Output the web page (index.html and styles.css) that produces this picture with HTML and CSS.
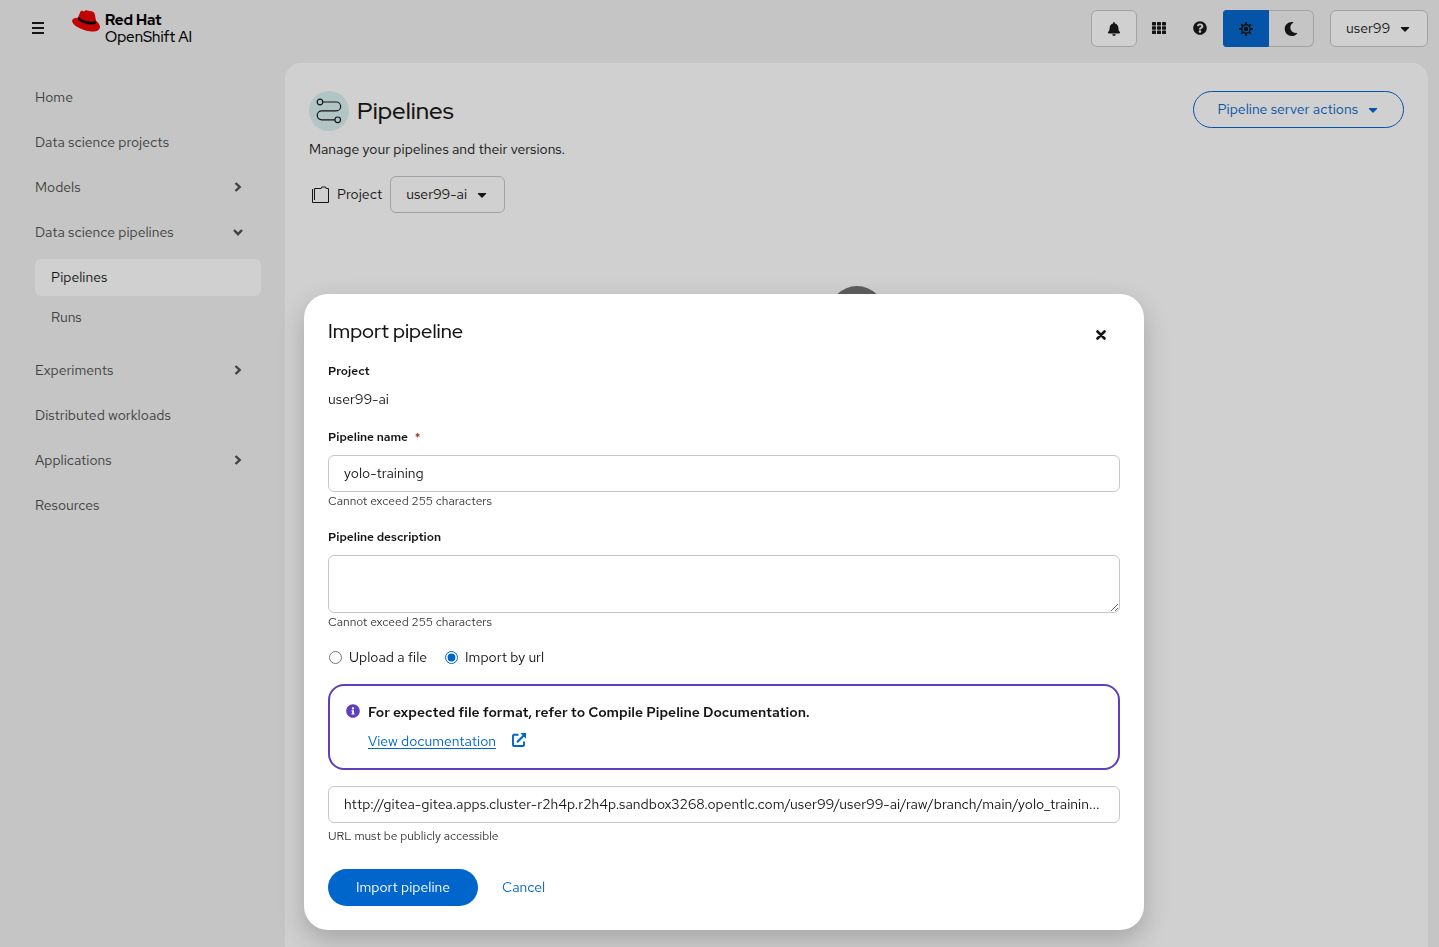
FILE: index.html
```
<!DOCTYPE html>
<html lang="en">
<head>
    <meta charset="UTF-8">
    <meta name="viewport" content="width=device-width, initial-scale=1.0">
    <title>Pipelines | Red Hat OpenShift AI</title>
    <link rel="stylesheet" href="styles.css">
</head>
<body>

<div class="page">
    <header class="masthead">
        <button class="plain-button menu-button" aria-label="Global navigation">
            <svg width="12" height="12" viewBox="0 0 12 12"><path d="M0 1h12M0 6h12M0 11h12" stroke="currentColor" stroke-width="2"/></svg>
        </button>
        <a class="brand" href="#">
            <svg class="hat" width="28" height="22" viewBox="0 0 28 22">
                <path d="M6.500 6.500 8.200 2Q9 .4 10.300 .8L12 1.500Q13.300 .1 15.200 .4L20.500 1.600Q22.300 2.100 22.700 3.900L24.100 10.800Q28.400 14 28 17.300C27.500 20.900 23.500 22.300 17.400 21.300C9.800 20.200 1.200 16 .2 11.600C-.3 8.800 2.600 7.700 6.200 7.800Z" fill="#e00"/>
                <path d="M6.700 6.600C8.500 10 17.900 13 23.500 11L24 13.600C20.500 16.200 8.700 13.200 5.900 9Z" fill="#000"/>
            </svg>
            <span class="brand-text"><strong>Red Hat</strong><span>OpenShift AI</span></span>
        </a>
        <div class="masthead-tools">
            <button class="tool-button bordered" aria-label="Notifications">
                <svg width="14" height="14" viewBox="0 0 448 512"><path fill="currentColor" d="M224 512c35.320 0 63.970-28.650 63.970-64H160.030c0 35.350 28.650 64 63.970 64zm215.390-149.710c-19.320-20.760-55.470-51.990-55.470-154.290 0-77.700-54.480-139.900-127.940-155.160V32c0-17.670-14.320-32-31.980-32s-31.980 14.330-31.980 32v20.840C118.560 68.100 64.080 130.300 64.080 208c0 102.300-36.150 133.530-55.470 154.290-6 6.450-8.660 14.160-8.610 21.710.11 16.400 12.980 32 32.100 32h383.800c19.120 0 32-15.600 32.100-32 .05-7.550-2.610-15.270-8.610-21.710z"/></svg>
            </button>
            <button class="tool-button" aria-label="Application launcher">
                <svg width="14" height="12" viewBox="0 0 14 12"><g fill="currentColor"><rect width="4" height="3.400" rx=".6"/><rect x="5" width="4" height="3.400" rx=".6"/><rect x="10" width="4" height="3.400" rx=".6"/><rect y="4.300" width="4" height="3.400" rx=".6"/><rect x="5" y="4.300" width="4" height="3.400" rx=".6"/><rect x="10" y="4.300" width="4" height="3.400" rx=".6"/><rect y="8.600" width="4" height="3.400" rx=".6"/><rect x="5" y="8.600" width="4" height="3.400" rx=".6"/><rect x="10" y="8.600" width="4" height="3.400" rx=".6"/></g></svg>
            </button>
            <button class="tool-button" aria-label="Help">
                <svg width="14" height="14" viewBox="0 0 512 512"><path fill="currentColor" d="M504 256c0 136.997-111.043 248-248 248S8 392.997 8 256C8 119.083 119.043 8 256 8s248 111.083 248 248zM262.655 90c-54.497 0-89.255 22.957-116.549 63.758-3.536 5.286-2.353 12.415 2.715 16.258l34.699 26.310c5.205 3.947 12.621 3.008 16.665-2.122 17.864-22.658 30.113-35.797 57.303-35.797 20.429 0 45.698 13.148 45.698 32.958 0 14.976-12.363 22.667-32.534 33.976C247.128 238.528 216 254.941 216 296v4c0 6.627 5.373 12 12 12h56c6.627 0 12-5.373 12-12v-1.333c0-28.462 83.186-29.647 83.186-106.667 0-58.002-60.165-102-116.531-102zM256 338c-25.365 0-46 20.635-46 46 0 25.364 20.635 46 46 46s46-20.636 46-46c0-25.365-20.635-46-46-46z"/></svg>
            </button>
            <div class="theme-toggle">
                <button class="selected" aria-label="Light theme">
                    <svg width="14" height="14" viewBox="0 0 14 14"><path d="M7 0v3M7 11v3M0 7h3M11 7h3M2.100 2.100l2 2M9.900 9.900l2 2M2.100 11.900l2-2M9.900 4.100l2-2" stroke="currentColor" stroke-width="1.800"/><circle cx="7" cy="7" r="4.200" fill="none" stroke="currentColor" stroke-width="1.400"/><circle cx="7" cy="7" r="2.200" fill="currentColor"/></svg>
                </button>
                <button aria-label="Dark theme">
                    <svg width="14" height="14" viewBox="0 0 512 512"><path fill="currentColor" d="M283.211 512c78.962 0 151.079-35.925 198.857-94.792 7.068-8.708-.639-21.430-11.562-19.350-124.203 23.654-238.262-71.576-238.262-196.954 0-72.222 38.662-138.635 101.498-174.394 9.686-5.512 7.250-20.197-3.756-22.230A258.156 258.156 0 0 0 283.211 0c-141.309 0-256 114.511-256 256 0 141.309 114.511 256 256 256z"/></svg>
                </button>
            </div>
            <button class="user-menu">user99 <svg width="10" height="5" viewBox="0 0 10 5"><path d="M1.300 0h7.400q.8.200.3.900L5.500 4.600q-.5.500-1 0L1 .9Q.5.200 1.300 0z" fill="currentColor"/></svg></button>
        </div>
    </header>

    <nav class="sidebar" aria-label="Global">
        <a href="#">Home</a>
        <a href="#">Data science projects</a>
        <a href="#">Models <svg width="10" height="11" viewBox="0 0 10 11"><path d="M2.500 1 6.700 5 2.500 9" fill="none" stroke="currentColor" stroke-width="2.400"/></svg></a>
        <a href="#">Data science pipelines <svg width="10" height="9" viewBox="0 0 10 9"><path d="M1 2l4 4.200L9 2" fill="none" stroke="currentColor" stroke-width="2.400"/></svg></a>
        <div class="subnav">
            <a class="current" href="#">Pipelines</a>
            <a href="#">Runs</a>
        </div>
        <a href="#">Experiments <svg width="10" height="11" viewBox="0 0 10 11"><path d="M2.500 1 6.700 5 2.500 9" fill="none" stroke="currentColor" stroke-width="2.400"/></svg></a>
        <a href="#">Distributed workloads</a>
        <a href="#">Applications <svg width="10" height="11" viewBox="0 0 10 11"><path d="M2.500 1 6.700 5 2.500 9" fill="none" stroke="currentColor" stroke-width="2.400"/></svg></a>
        <a href="#">Resources</a>
    </nav>

    <main class="content">
        <div class="page-header">
            <div class="page-title">
                <span class="title-icon">
                    <svg width="26" height="26" viewBox="0 0 26 26" fill="none" stroke="#151515" stroke-width="1.200"><circle cx="4" cy="4" r="2.800"/><path d="M6.800 4h13.400a4.400 4.400 0 0 1 0 8.900H5.700a4.400 4.400 0 0 0 0 8.900h13.200"/><circle cx="21.700" cy="21.800" r="2.800"/></svg>
                </span>
                <h1>Pipelines</h1>
            </div>
            <button class="actions-button">Pipeline server actions <svg width="10" height="5" viewBox="0 0 10 5"><path d="M1.300 0h7.400q.8.200.3.900L5.500 4.600q-.5.500-1 0L1 .9Q.5.200 1.300 0z" fill="currentColor"/></svg></button>
        </div>
        <p class="page-description">Manage your pipelines and their versions.</p>
        <div class="project-row">
            <svg width="18" height="18" viewBox="0 0 18 18" fill="none" stroke="#151515"><path d="M3.500 14V2.500h6.700l.6-1.500h3.700l.6 1.500h2.400v14H1.500V3"/></svg>
            <label for="projectSelect">Project</label>
            <select id="projectSelect">
                <option>user99-ai</option>
            </select>
        </div>
        <div class="empty-state">
            <svg width="56" height="56" viewBox="0 0 56 56"><circle cx="28" cy="28" r="28" fill="#707070"/><path d="M28 15v26M15 28h26" stroke="#fff" stroke-width="6"/></svg>
        </div>
    </main>
</div>

<div class="backdrop">
    <div class="modal" role="dialog" aria-labelledby="modalTitle">
        <div class="modal-header">
            <h2 id="modalTitle">Import pipeline</h2>
            <button class="plain-button close-button" aria-label="Close">
                <svg width="10" height="10" viewBox="0 0 10 10"><path d="M1.500 1.500l7 7M8.500 1.500l-7 7" stroke="currentColor" stroke-width="2.600" stroke-linecap="round"/></svg>
            </button>
        </div>
        <form>
            <div class="form-group">
                <div class="form-label">Project</div>
                <div>user99-ai</div>
            </div>
            <div class="form-group">
                <label class="form-label" for="pipelineName">Pipeline name <span class="required">*</span></label>
                <input type="text" id="pipelineName" value="yolo-training">
                <div class="helper-text">Cannot exceed 255 characters</div>
            </div>
            <div class="form-group description-group">
                <label class="form-label" for="pipelineDescription">Pipeline description</label>
                <textarea id="pipelineDescription"></textarea>
                <div class="helper-text">Cannot exceed 255 characters</div>
            </div>
            <div class="radio-group">
                <label><input type="radio" name="source"> Upload a file</label>
                <label><input type="radio" name="source" checked> Import by url</label>
            </div>
            <div class="alert">
                <svg width="14" height="14" viewBox="0 0 512 512"><path fill="#5e40be" d="M256 8C119.043 8 8 119.083 8 256c0 136.997 111.043 248 248 248s248-111.003 248-248C504 119.083 392.957 8 256 8zm0 110c23.196 0 42 18.804 42 42s-18.804 42-42 42-42-18.804-42-42 18.804-42 42-42zm56 254c0 6.627-5.373 12-12 12h-88c-6.627 0-12-5.373-12-12v-24c0-6.627 5.373-12 12-12h12v-64h-12c-6.627 0-12-5.373-12-12v-24c0-6.627 5.373-12 12-12h64c6.627 0 12 5.373 12 12v100h12c6.627 0 12 5.373 12 12v24z"/></svg>
                <div>
                    <h3>For expected file format, refer to Compile Pipeline Documentation.</h3>
                    <div class="alert-link">
                        <a href="#">View documentation</a>
                        <svg width="14" height="16" viewBox="0 0 14 16"><path d="M6.500 3.800H2Q1 3.800 1 4.800V14q0 1 1 1h9q1 0 1-1V10.500" fill="none" stroke="#06c" stroke-width="1.900"/><path d="M5 11.300 11.500 4.800" stroke="#06c" stroke-width="2.200"/><path d="M8.300 2H14v5.700z" fill="#06c"/></svg>
                    </div>
                </div>
            </div>
            <input type="text" aria-label="Pipeline URL" value="http://gitea-gitea.apps.cluster-r2h4p.r2h4p.sandbox3268.opentlc.com/user99/user99-ai/raw/branch/main/yolo_trainin...">
            <div class="helper-text url-helper">URL must be publicly accessible</div>
            <div class="modal-footer">
                <button type="button" class="primary-button">Import pipeline</button>
                <button type="button" class="link-button">Cancel</button>
            </div>
        </form>
    </div>
</div>

</body>
</html>
```
FILE: styles.css
```
* {
    box-sizing: border-box;
}
body {
    margin: 0;
    font-family: "Red Hat Text", Roboto, "Liberation Sans", sans-serif;
    font-size: 14px;
    line-height: 21px;
    color: #151515;
    background-color: #f2f2f2;
}
h1, h2, h3, p {
    margin: 0;
}
h1, h2 {
    font-family: "Red Hat Display", "Red Hat Text", Roboto, sans-serif;
    font-weight: 500;
}
button, input, select, textarea {
    font: inherit;
    color: inherit;
}
button {
    padding: 0;
    border: none;
    background: none;
    cursor: pointer;
}
svg {
    flex-shrink: 0;
}
.page {
    display: grid;
    grid-template-columns: 285px 1fr;
    grid-template-rows: 63px 1fr;
    height: 100vh;
    overflow: hidden;
}

/* masthead */
.masthead {
    grid-column: 1 / 3;
    display: flex;
    align-items: flex-start;
    padding: 10px 11px 0 20px;
}
.plain-button {
    display: flex;
    align-items: center;
    justify-content: center;
    width: 36px;
    height: 36px;
}
.brand {
    display: flex;
    gap: 5px;
    margin-left: 16px;
    color: #000;
    text-decoration: none;
}
.brand-text {
    display: flex;
    flex-direction: column;
    padding-top: 2px;
    font-family: "Red Hat Display", "Red Hat Text", Roboto, sans-serif;
    font-size: 15px;
    font-weight: 500;
    line-height: 17px;
}
.brand-text strong {
    font-weight: 800;
}
.masthead-tools {
    display: flex;
    margin-left: auto;
}
.tool-button {
    display: flex;
    align-items: center;
    justify-content: center;
    width: 41px;
    height: 36px;
}
.tool-button.bordered {
    width: 46px;
    height: 37px;
    margin-right: 1px;
    border: 1px solid #c7c7c7;
    border-radius: 6px;
    background-color: #fff;
}
.theme-toggle {
    display: flex;
    margin: 0 16px 0 3px;
}
.theme-toggle button {
    display: flex;
    align-items: center;
    justify-content: center;
    width: 45px;
    height: 37px;
    border: 1px solid #c7c7c7;
    border-left: none;
    border-radius: 0 6px 6px 0;
}
.theme-toggle .selected {
    width: 46px;
    border: 1px solid #06c;
    border-radius: 3px 0 0 3px;
    background-color: #06c;
}
.user-menu {
    display: flex;
    align-items: center;
    justify-content: space-between;
    width: 98px;
    height: 37px;
    padding: 0 17px 0 15px;
    border: 1px solid #c7c7c7;
    border-radius: 6px;
    background-color: #fff;
}
.user-menu svg, .actions-button svg {
    margin-top: 2px;
}

/* sidebar */
.sidebar {
    display: flex;
    flex-direction: column;
    gap: 8px;
    padding: 16px 24px 0 19px;
}
.sidebar a {
    display: flex;
    align-items: center;
    justify-content: space-between;
    height: 37px;
    padding: 0 18px 0 16px;
    border-radius: 6px;
    color: #4d4d4d;
    text-decoration: none;
}
.subnav {
    display: flex;
    flex-direction: column;
    gap: 3px;
    padding: 0 0 8px 16px;
}
.sidebar .current {
    color: #151515;
    background-color: #fff;
}

/* content */
.content {
    margin-right: 11px;
    padding: 28px 24px;
    border-radius: 16px 16px 0 0;
    background-color: #fff;
}
.page-header {
    display: flex;
    align-items: flex-start;
    justify-content: space-between;
}
.page-title {
    display: flex;
    align-items: center;
    gap: 8px;
}
.title-icon {
    display: flex;
    align-items: center;
    justify-content: center;
    width: 40px;
    height: 40px;
    border-radius: 50%;
    background-color: #daf2f2;
}
.page-title h1 {
    font-size: 24px;
    line-height: 32px;
}
.actions-button {
    display: flex;
    align-items: center;
    gap: 10px;
    height: 37px;
    padding: 0 25px 0 23px;
    border: 1px solid #06c;
    border-radius: 20px;
    color: #06c;
}
.page-description {
    margin: 8px 0 16px;
}
.project-row {
    display: flex;
    align-items: center;
    gap: 8px;
    padding-left: 2px;
}
.project-row select {
    width: 115px;
    height: 37px;
    padding: 0 32px 0 15px;
    border: 1px solid #c7c7c7;
    border-radius: 6px;
    appearance: none;
    background: #fff url("data:image/svg+xml,%3Csvg xmlns='http://www.w3.org/2000/svg' width='10' height='5'%3E%3Cpath d='M1.3 0h7.400q.8.200.3.900L5.500 4.600q-.5.500-1 0L1 .9Q.5.200 1.300 0z' fill='%23151515'/%3E%3C/svg%3E") no-repeat right 17px top 16px;
}
.empty-state {
    padding-top: 73px;
    text-align: center;
}

/* modal */
.backdrop {
    position: fixed;
    inset: 0;
    display: flex;
    align-items: flex-end;
    justify-content: center;
    padding: 0 0 17px 9px;
    background-color: rgba(21, 21, 21, 0.2);
}
.modal {
    width: 100%;
    max-width: 840px;
    padding: 24px;
    border-radius: 24px;
    background-color: #fff;
    box-shadow: 0 10px 24px rgba(41, 41, 41, 0.25);
}
.modal-header {
    display: flex;
    align-items: center;
    justify-content: space-between;
    height: 26px;
    margin-bottom: 18px;
}
.modal-header h2 {
    font-size: 20px;
    line-height: 26px;
}
.close-button {
    align-self: flex-start;
    width: 38px;
    height: 34px;
}
.form-group {
    margin-bottom: 18px;
}
.description-group {
    margin-bottom: 16px;
}
.form-label {
    display: block;
    margin-bottom: 9px;
    font-size: 12px;
    font-weight: 600;
    line-height: 18px;
}
.required {
    margin-left: 4px;
    color: #b1380b;
}
input[type="text"], textarea {
    display: block;
    width: 100%;
    height: 37px;
    padding: 0 15px;
    border: 1px solid #c7c7c7;
    border-radius: 6px;
    background-color: #fff;
    text-overflow: ellipsis;
}
input[type="text"] {
    padding-bottom: 1px;
}
textarea {
    height: 58px;
    padding: 8px 15px;
    resize: vertical;
}
.helper-text {
    font-size: 12px;
    line-height: 18px;
    color: #383838;
}
.radio-group {
    display: flex;
    gap: 17px;
    margin-bottom: 16px;
}
.radio-group label {
    display: flex;
    align-items: center;
    gap: 6px;
}
.radio-group input {
    width: 13px;
    height: 13px;
    margin: 0 1px;
    accent-color: #06c;
}
.alert {
    display: flex;
    gap: 8px;
    margin-bottom: 16px;
    padding: 16px;
    border: 2px solid #5e40be;
    border-radius: 16px;
}
.alert > svg {
    margin-top: 2px;
}
.alert h3 {
    margin-bottom: 8px;
    font-size: 14px;
    font-weight: 600;
    line-height: 21px;
}
.alert-link {
    display: flex;
    align-items: flex-start;
    gap: 16px;
}
.alert-link a {
    color: #06c;
    text-underline-offset: 2px;
}
.url-helper {
    margin-top: 4px;
}
.modal-footer {
    display: flex;
    gap: 24px;
    margin-top: 24px;
}
.primary-button {
    width: 150px;
    height: 37px;
    border-radius: 20px;
    color: #fff;
    background-color: #06c;
}
.link-button {
    color: #06c;
}
```
